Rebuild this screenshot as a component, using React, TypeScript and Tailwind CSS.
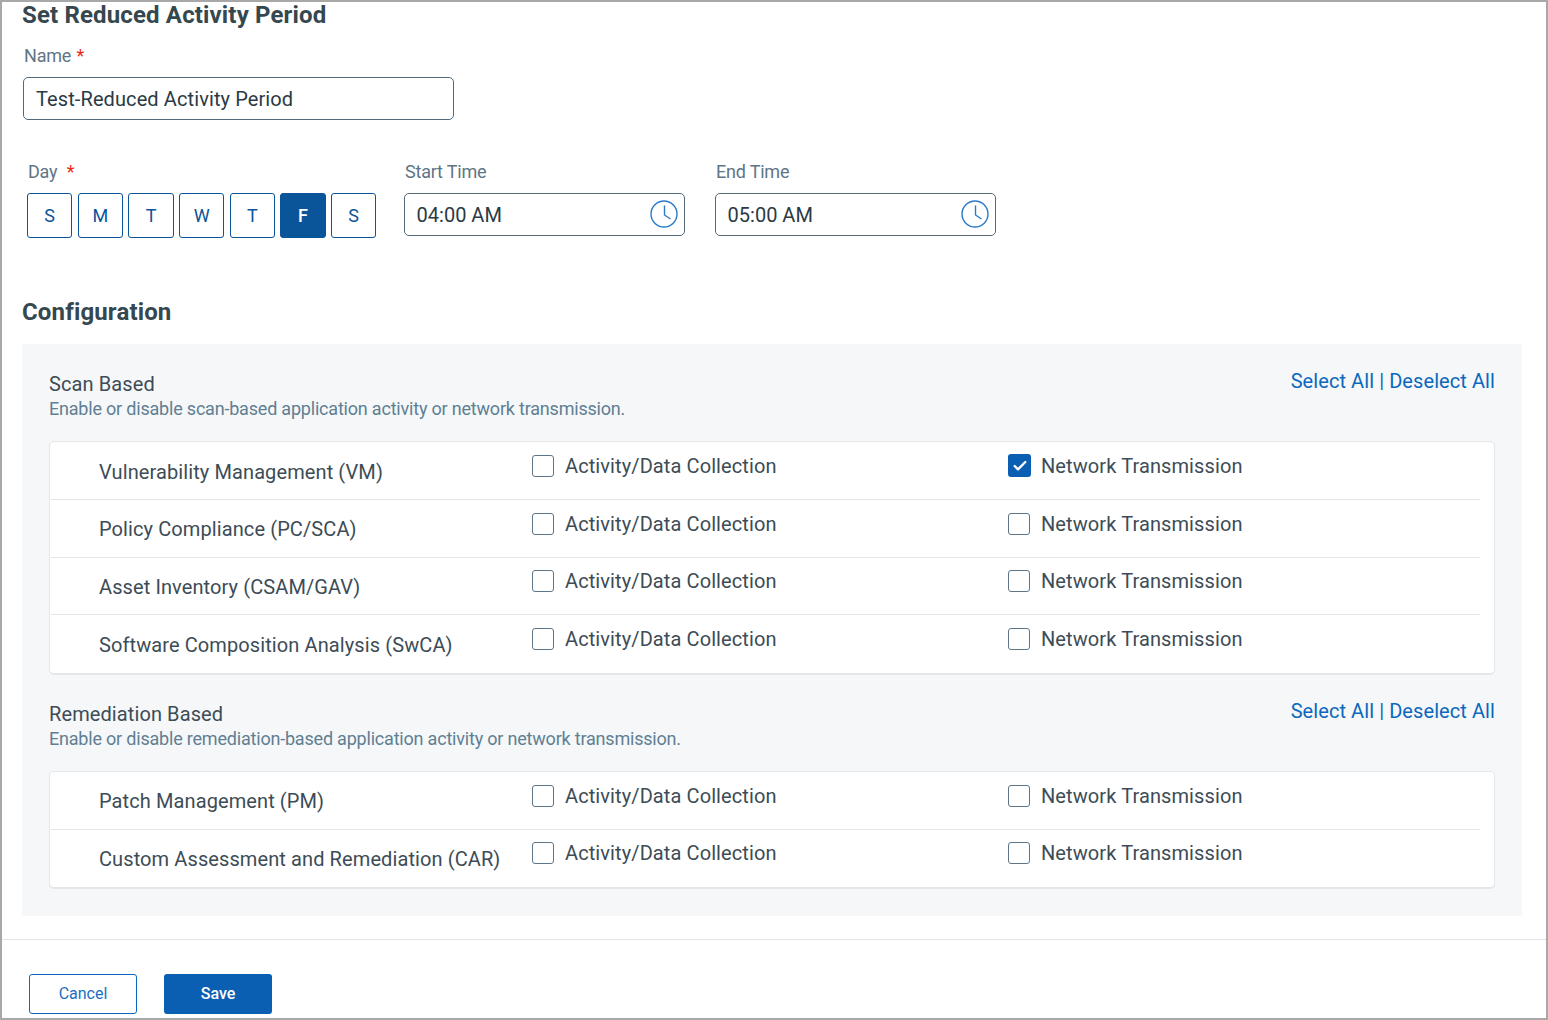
import { Check } from "lucide-react";

type Row = { name: string; activity?: boolean; network?: boolean };

const days = ["S", "M", "T", "W", "T", "F", "S"];

const scanRows: Row[] = [
  { name: "Vulnerability Management (VM)", network: true },
  { name: "Policy Compliance (PC/SCA)" },
  { name: "Asset Inventory (CSAM/GAV)" },
  { name: "Software Composition Analysis (SwCA)" },
];

const remediationRows: Row[] = [
  { name: "Patch Management (PM)" },
  { name: "Custom Assessment and Remediation (CAR)" },
];

function ClockIcon() {
  return (
    <svg className="mb-[2px]" width="28" height="28" viewBox="0 0 28 28" fill="none" stroke="#2a7bc8" strokeWidth="1.4">
      <circle cx="14" cy="14" r="13" />
      <path d="M14.5 5.5V15l6 4" />
    </svg>
  );
}

function TimeField({ label, value, className }: { label: string; value: string; className: string }) {
  return (
    <div className={className}>
      <div className="h-[22px] pl-[1px] text-[18px] leading-[22px] tracking-[-0.2px] text-[#5f7585]">{label}</div>
      <div className="mt-[10px] flex h-[43px] w-[281px] items-center justify-between rounded-[5px] border border-[#546a79] pl-[11.6px] pr-[6px] text-[20px] text-[#2b3a44]">
        <span>{value}</span>
        <ClockIcon />
      </div>
    </div>
  );
}

function Box({ checked }: { checked?: boolean }) {
  return checked ? (
    <span className="flex h-[23px] w-[23px] items-center justify-center rounded-[3px] bg-[#0b5fb3]">
      <Check className="h-[16px] w-[16px] text-white" strokeWidth={3.5} />
    </span>
  ) : (
    <span className="h-[22px] w-[22px] rounded-[3px] border border-[#5f7585] bg-white" />
  );
}

function Option({ label, checked, className }: { label: string; checked?: boolean; className: string }) {
  return (
    <div className={`flex items-center ${className}`}>
      <span className="flex w-[33px]">
        <Box checked={checked} />
      </span>
      <span className="text-[20px] leading-[24px] tracking-[0.1px] text-[#3d4c56]">{label}</span>
    </div>
  );
}

function Section({ title, hint, rows, className }: { title: string; hint: string; rows: Row[]; className?: string }) {
  return (
    <section className={className}>
      <div className="flex items-start justify-between">
        <div>
          <div className="h-[24px] text-[20px] leading-[24px] tracking-[0.1px] text-[#3d4c56]">{title}</div>
          <div className="mt-[1px] text-[18px] leading-[24px] tracking-[-0.2px] text-[#5f7f93]">{hint}</div>
        </div>
        <div className="-mt-[3px] text-[20px] leading-[24px] tracking-[0.08px] text-[#0b68bd]">
          Select All | Deselect All
        </div>
      </div>
      <div className="mt-[20.4px] rounded-[5px] border border-b-2 border-[#e3e7ea] bg-white pl-[1px] pr-[14px]">
        {rows.map((r, i) => (
          <div
            key={r.name}
            className={`flex h-[57.67px] items-start ${i < rows.length - 1 ? "border-b border-[#e3e7ea]" : ""}`}
          >
            <div className="mt-[17.3px] w-[481px] pl-[48px] text-[20px] leading-[24px] tracking-[0.1px] whitespace-nowrap text-[#3d4c56]">
              {r.name}
            </div>
            <Option className="mt-[11.5px] w-[476px]" label="Activity/Data Collection" checked={r.activity} />
            <Option className="mt-[11.5px]" label="Network Transmission" checked={r.network} />
          </div>
        ))}
      </div>
    </section>
  );
}

export default function App() {
  return (
    <div
      className="h-[1020px] w-[1548px] overflow-hidden border-2 border-[#a8a8a8] bg-white"
      style={{ fontFamily: "Roboto, sans-serif" }}
    >
      <div className="px-[20px]">
        <h1 className="h-[26px] text-[24px] leading-[26px] font-bold tracking-[0.15px] text-[#35474f]">
          Set Reduced Activity Period
        </h1>

        <div className="mt-[17px] pl-[2px] text-[18px] leading-[22px] tracking-[-0.2px] text-[#5f7585]">
          Name <span className="ml-[1px] text-[#ee2a1b]">*</span>
        </div>
        <div className="mt-[10px] ml-[1px] flex h-[43px] w-[431px] items-center rounded-[5px] border border-[#546a79] pl-[12px] text-[20px] tracking-[0.1px] text-[#2b3a44]">
          Test-Reduced Activity Period
        </div>

        <div className="mt-[41px] flex">
          <div className="ml-[5px] w-[377px]">
            <div className="h-[22px] pl-[1px] text-[18px] leading-[22px] tracking-[-0.2px] text-[#5f7585]">
              Day <span className="ml-[5px] text-[#ee2a1b]">*</span>
            </div>
            <div className="mt-[10px] flex gap-[5.27px]">
              {days.map((d, i) => (
                <div
                  key={i}
                  className={`flex h-[45px] w-[45.4px] items-center justify-center rounded-[3px] border border-[#0a5499] text-[18px] ${
                    i === 5 ? "bg-[#0a5499] font-medium text-white" : "text-[#0a5499]"
                  }`}
                >
                  {d}
                </div>
              ))}
            </div>
          </div>
          <TimeField className="" label="Start Time" value="04:00 AM" />
          <TimeField className="ml-[30px]" label="End Time" value="05:00 AM" />
        </div>

        <h2 className="mt-[60px] text-[24px] leading-[28px] font-bold tracking-[0.15px] text-[#35474f]">
          Configuration
        </h2>

        <div className="mt-[18px] h-[572px] w-[1500px] bg-[#f5f7f9] pt-[28px] pr-[27px] pl-[27px]">
          <Section
            title="Scan Based"
            hint="Enable or disable scan-based application activity or network transmission."
            rows={scanRows}
          />
          <Section
            className="mt-[26.6px]"
            title="Remediation Based"
            hint="Enable or disable remediation-based application activity or network transmission."
            rows={remediationRows}
          />
        </div>
      </div>

      <div className="mt-[23px] flex gap-[27px] border-t border-[#e3e7ea] pt-[34px] pl-[27px]">
        <button className="h-[40px] w-[108px] rounded-[3px] border border-[#0b68bd] text-[16px] text-[#1b6fc2]">
          Cancel
        </button>
        <button className="h-[40px] w-[108px] rounded-[3px] bg-[#0b5fb3] text-[16px] font-medium text-white">
          Save
        </button>
      </div>
    </div>
  );
}
